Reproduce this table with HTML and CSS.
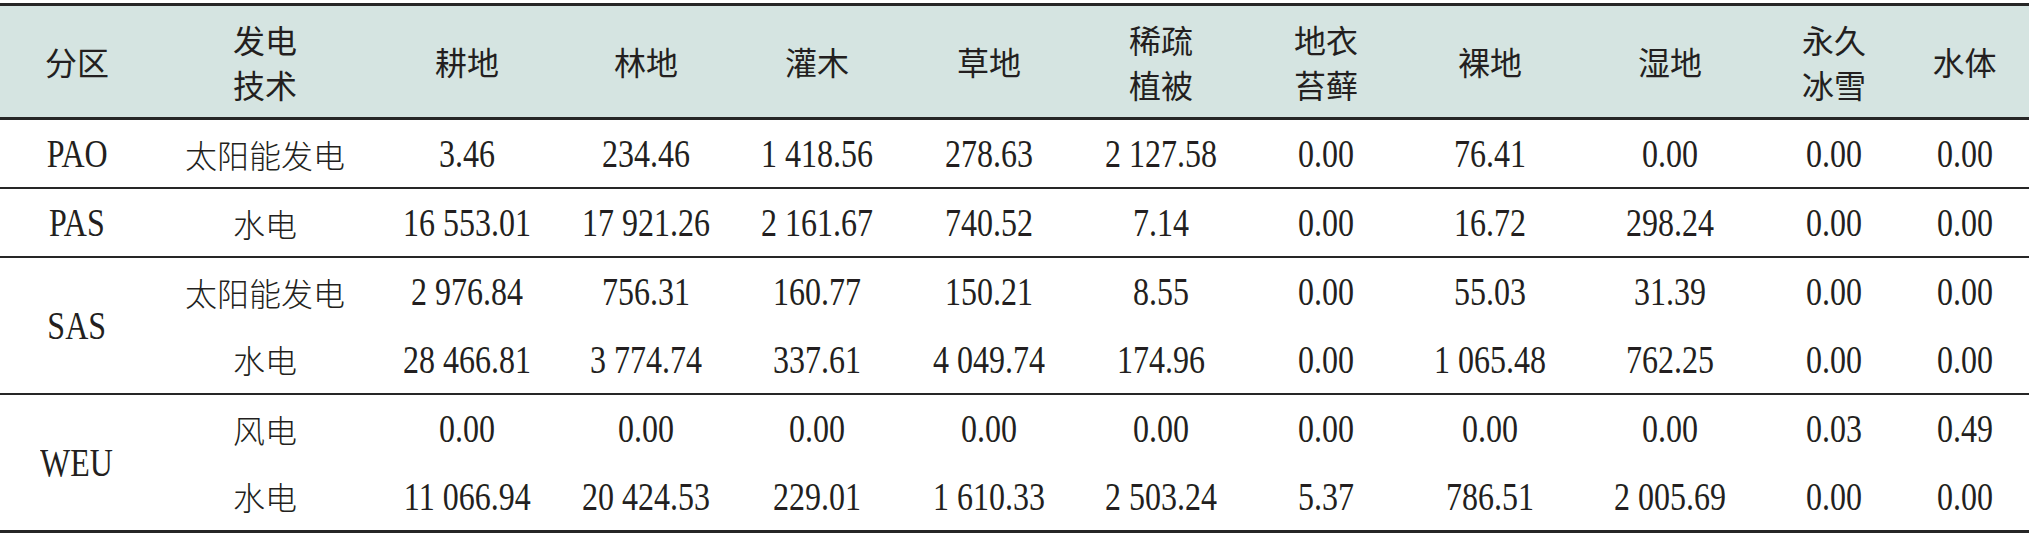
FILE: index.html
```html
<!DOCTYPE html>
<html lang="zh">
<head>
<meta charset="utf-8">
<title>分区发电技术土地覆盖</title>
<link rel="stylesheet" href="styles.css">
</head>
<body>
<table class="land">
  <colgroup>
    <col class="w1"><col class="w2"><col class="w3"><col class="w4"><col class="w5"><col class="w6">
    <col class="w7"><col class="w8"><col class="w9"><col class="w10"><col class="w11"><col class="w12">
  </colgroup>
  <thead>
    <tr>
      <th>分区</th>
      <th>发电<br>技术</th>
      <th>耕地</th>
      <th>林地</th>
      <th>灌木</th>
      <th>草地</th>
      <th>稀疏<br>植被</th>
      <th>地衣<br>苔藓</th>
      <th>裸地</th>
      <th>湿地</th>
      <th>永久<br>冰雪</th>
      <th>水体</th>
    </tr>
  </thead>
  <tbody class="grp lead">
    <tr class="r1">
      <td><span class="n">PAO</span></td>
      <td class="tech">太阳能发电</td>
      <td><span class="n">3.46</span></td>
      <td><span class="n">234.46</span></td>
      <td><span class="n">1 418.56</span></td>
      <td><span class="n">278.63</span></td>
      <td><span class="n">2 127.58</span></td>
      <td><span class="n">0.00</span></td>
      <td><span class="n">76.41</span></td>
      <td><span class="n">0.00</span></td>
      <td><span class="n">0.00</span></td>
      <td><span class="n">0.00</span></td>
    </tr>
  </tbody>
  <tbody class="grp">
    <tr class="r1">
      <td><span class="n">PAS</span></td>
      <td class="tech">水电</td>
      <td><span class="n">16 553.01</span></td>
      <td><span class="n">17 921.26</span></td>
      <td><span class="n">2 161.67</span></td>
      <td><span class="n">740.52</span></td>
      <td><span class="n">7.14</span></td>
      <td><span class="n">0.00</span></td>
      <td><span class="n">16.72</span></td>
      <td><span class="n">298.24</span></td>
      <td><span class="n">0.00</span></td>
      <td><span class="n">0.00</span></td>
    </tr>
  </tbody>
  <tbody class="grp">
    <tr class="r1">
      <td rowspan="2"><span class="n">SAS</span></td>
      <td class="tech">太阳能发电</td>
      <td><span class="n">2 976.84</span></td>
      <td><span class="n">756.31</span></td>
      <td><span class="n">160.77</span></td>
      <td><span class="n">150.21</span></td>
      <td><span class="n">8.55</span></td>
      <td><span class="n">0.00</span></td>
      <td><span class="n">55.03</span></td>
      <td><span class="n">31.39</span></td>
      <td><span class="n">0.00</span></td>
      <td><span class="n">0.00</span></td>
    </tr>
    <tr class="r2">
      <td class="tech">水电</td>
      <td><span class="n">28 466.81</span></td>
      <td><span class="n">3 774.74</span></td>
      <td><span class="n">337.61</span></td>
      <td><span class="n">4 049.74</span></td>
      <td><span class="n">174.96</span></td>
      <td><span class="n">0.00</span></td>
      <td><span class="n">1 065.48</span></td>
      <td><span class="n">762.25</span></td>
      <td><span class="n">0.00</span></td>
      <td><span class="n">0.00</span></td>
    </tr>
  </tbody>
  <tbody class="grp last">
    <tr class="r1">
      <td rowspan="2"><span class="n">WEU</span></td>
      <td class="tech">风电</td>
      <td><span class="n">0.00</span></td>
      <td><span class="n">0.00</span></td>
      <td><span class="n">0.00</span></td>
      <td><span class="n">0.00</span></td>
      <td><span class="n">0.00</span></td>
      <td><span class="n">0.00</span></td>
      <td><span class="n">0.00</span></td>
      <td><span class="n">0.00</span></td>
      <td><span class="n">0.03</span></td>
      <td><span class="n">0.49</span></td>
    </tr>
    <tr class="r2">
      <td class="tech">水电</td>
      <td><span class="n">11 066.94</span></td>
      <td><span class="n">20 424.53</span></td>
      <td><span class="n">229.01</span></td>
      <td><span class="n">1 610.33</span></td>
      <td><span class="n">2 503.24</span></td>
      <td><span class="n">5.37</span></td>
      <td><span class="n">786.51</span></td>
      <td><span class="n">2 005.69</span></td>
      <td><span class="n">0.00</span></td>
      <td><span class="n">0.00</span></td>
    </tr>
  </tbody>
</table>
</body>
</html>
```

FILE: styles.css
```css
html, body {
  margin: 0;
  padding: 0;
  background: #ffffff;
}

body {
  padding-top: 3px;
  color: #231f20;
  font-family: "Noto Sans CJK SC", sans-serif;
}

.land {
  width: 2029px;
  table-layout: fixed;
  border-collapse: separate;
  border-spacing: 0;
}

.w1 { width: 154px; }
.w2 { width: 222px; }
.w3 { width: 182px; }
.w4 { width: 176px; }
.w5 { width: 166px; }
.w6 { width: 178px; }
.w7 { width: 166px; }
.w8 { width: 164px; }
.w9 { width: 164px; }
.w10 { width: 196px; }
.w11 { width: 132px; }
.w12 { width: 129px; }

.land th,
.land td {
  box-sizing: border-box;
  padding: 0;
  text-align: center;
  vertical-align: middle;
  white-space: nowrap;
}

.land th {
  height: 117px;
  background: #d5e4e1;
  border-top: 3px solid #262626;
  border-bottom: 3px solid #262626;
  font-family: "Noto Sans CJK SC", sans-serif;
  font-weight: 400;
  font-size: 32px;
  line-height: 45px;
  color: #231f20;
}

.land td {
  height: 67px;
  font-size: 32px;
  line-height: 40px;
}

.grp .r2 td {
  height: 68px;
}

.grp:not(.lead) .r1 td {
  border-top: 2px solid #262626;
  height: 69px;
}

.grp:not(.lead) .r1 td[rowspan] {
  height: 69px;
}

.last .r2 td,
.last td[rowspan] {
  border-bottom: 3px solid #262626;
}

.last .r2 td {
  height: 71px;
}

.tech {
  font-family: "Noto Sans CJK SC", sans-serif;
  font-weight: 300;
  font-size: 32px;
  letter-spacing: 0;
}

.n {
  display: inline-block;
  font-family: "Liberation Serif", "Times New Roman", serif;
  font-size: 40px;
  line-height: 40px;
  transform: scaleX(0.8);
  transform-origin: center center;
}
```
